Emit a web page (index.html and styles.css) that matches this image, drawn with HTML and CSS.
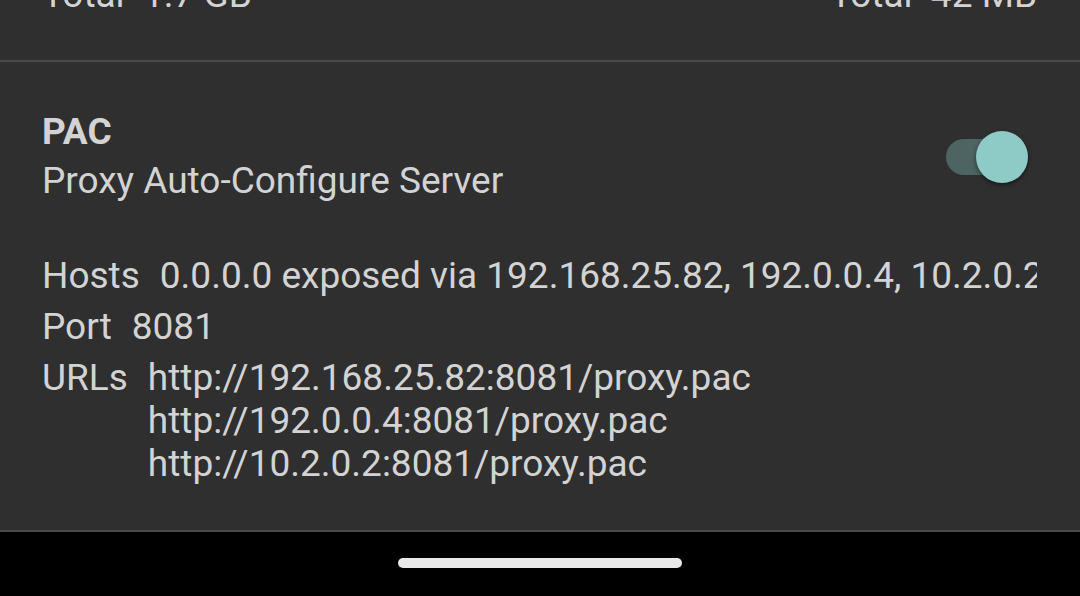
FILE: index.html
```html
<!DOCTYPE html>
<html>
<head>
<meta charset="utf-8">
<link rel="stylesheet" href="styles.css">
</head>
<body>
<div class="screen">
  <div class="content">
    <section class="stats">
      <div class="stat">Total&nbsp; 1.7 GB</div>
      <div class="stat">Total&nbsp; 42 MB</div>
    </section>
    <div class="divider"></div>
    <section class="pac">
      <div class="pac-head">
        <div class="pac-titles">
          <div class="pac-title">PAC</div>
          <div class="pac-sub">Proxy Auto-Configure Server</div>
        </div>
        <div class="switch on"><div class="track"></div><div class="thumb"></div></div>
      </div>
      <div class="details">
        <div class="row"><span class="label">Hosts</span><span class="value clip">0.0.0.0 exposed via 192.168.25.82, 192.0.0.4, 10.2.0.2</span></div>
        <div class="row"><span class="label">Port</span><span class="value">8081</span></div>
        <div class="row"><span class="label">URLs</span><span class="value multi"><span>http://192.168.25.82:8081/proxy.pac</span><span>http://192.0.0.4:8081/proxy.pac</span><span>http://10.2.0.2:8081/proxy.pac</span></span></div>
      </div>
    </section>
    <div class="divider"></div>
  </div>
  <div class="navbar"><div class="pill"></div></div>
</div>
</body>
</html>
```
FILE: styles.css
```css
html, body { margin: 0; padding: 0; }
body { background: #000; font-family: Roboto, "Noto Sans", sans-serif; color: #d3d3d3; }
.screen { width: 1080px; height: 596px; display: flex; flex-direction: column; overflow: hidden; }
.content { background: #2f2f2f; flex: 1; display: flex; flex-direction: column; overflow: hidden; }
.stats { display: flex; justify-content: space-between; padding: 0 43px 0 42px; height: 87px; font-size: 37px; line-height: 43px; margin-top: -27px; flex: none; }
.stat { white-space: nowrap; }
.divider { height: 2px; background: #4a4a4a; flex: none; }
.pac { padding: 48px 43px 0 42px; flex: 1; }
.pac-head { display: flex; justify-content: space-between; align-items: flex-start; }
.pac-title { font-size: 37px; font-weight: 700; line-height: 43px; }
.pac-sub { font-size: 37px; line-height: 43px; margin-top: 6px; }
.switch { position: relative; width: 82px; height: 52px; margin-top: 21px; margin-right: 9px; flex: none; }
.track { position: absolute; left: 0; top: 8px; width: 62px; height: 36px; border-radius: 18px; background: #4d6462; }
.thumb { position: absolute; left: 30px; top: 0; width: 52px; height: 52px; border-radius: 50%; background: #8ecac6; box-shadow: 0 2px 4px rgba(0,0,0,0.5); }
.details { margin-top: 52px; font-size: 37px; }
.row { display: flex; line-height: 43px; margin-bottom: 8px; }
.label { flex: none; margin-right: 20px; }
.value { flex: 1; min-width: 0; }
.clip { white-space: nowrap; overflow: hidden; }
.multi { display: flex; flex-direction: column; }
.navbar { height: 64px; background: #000; display: flex; justify-content: center; align-items: center; flex: none; }
.pill { width: 284px; height: 10px; border-radius: 5px; background: #e9e9e9; margin-top: -2px; }
```
